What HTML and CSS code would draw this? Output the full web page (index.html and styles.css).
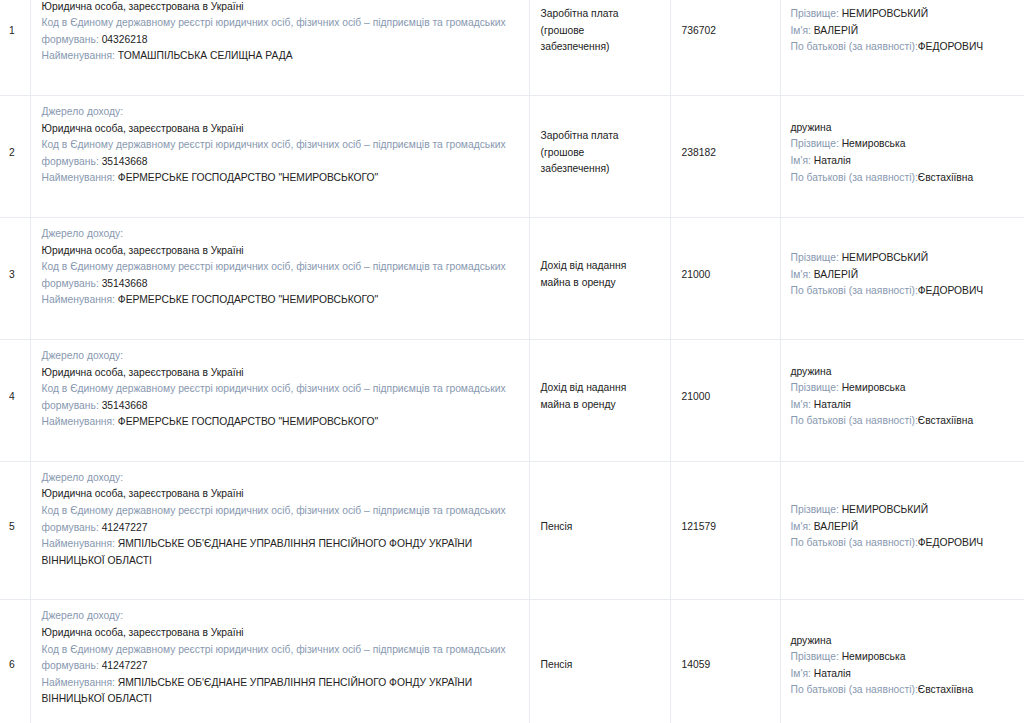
FILE: index.html
```html
<!DOCTYPE html>
<html lang="uk">
<head>
<meta charset="utf-8">
<link rel="stylesheet" href="styles.css">
</head>
<body>
<table class="income">
  <colgroup>
    <col class="c-num"><col class="c-src"><col class="c-type"><col class="c-sum"><col class="c-person">
  </colgroup>
  <tbody>
    <tr>
      <td class="num">1</td>
      <td class="src"><div class="src-body">
        <div class="lbl">Джерело доходу:</div>
        <div>Юридична особа, зареєстрована в Україні</div>
        <div><span class="lbl">Код в Єдиному державному реєстрі юридичних осіб, фізичних осіб – підприємців та громадських формувань:</span> 04326218</div>
        <div><span class="lbl">Найменування:</span> ТОМАШПІЛЬСЬКА СЕЛИЩНА РАДА</div>
      </div></td>
      <td class="type">Заробітна плата (грошове забезпечення)</td>
      <td class="sum">736702</td>
      <td class="person">
        <div><span class="lbl">Прізвище:</span> НЕМИРОВСЬКИЙ</div>
        <div><span class="lbl">Ім'я:</span> ВАЛЕРІЙ</div>
        <div><span class="lbl">По батькові (за наявності):</span>ФЕДОРОВИЧ</div>
      </td>
    </tr>
    <tr>
      <td class="num">2</td>
      <td class="src"><div class="src-body">
        <div class="lbl">Джерело доходу:</div>
        <div>Юридична особа, зареєстрована в Україні</div>
        <div><span class="lbl">Код в Єдиному державному реєстрі юридичних осіб, фізичних осіб – підприємців та громадських формувань:</span> 35143668</div>
        <div><span class="lbl">Найменування:</span> ФЕРМЕРСЬКЕ ГОСПОДАРСТВО "НЕМИРОВСЬКОГО"</div>
      </div></td>
      <td class="type">Заробітна плата (грошове забезпечення)</td>
      <td class="sum">238182</td>
      <td class="person">
        <div>дружина</div>
        <div><span class="lbl">Прізвище:</span> Немировська</div>
        <div><span class="lbl">Ім'я:</span> Наталія</div>
        <div><span class="lbl">По батькові (за наявності):</span>Євстахіївна</div>
      </td>
    </tr>
    <tr>
      <td class="num">3</td>
      <td class="src"><div class="src-body">
        <div class="lbl">Джерело доходу:</div>
        <div>Юридична особа, зареєстрована в Україні</div>
        <div><span class="lbl">Код в Єдиному державному реєстрі юридичних осіб, фізичних осіб – підприємців та громадських формувань:</span> 35143668</div>
        <div><span class="lbl">Найменування:</span> ФЕРМЕРСЬКЕ ГОСПОДАРСТВО "НЕМИРОВСЬКОГО"</div>
      </div></td>
      <td class="type">Дохід від надання майна в оренду</td>
      <td class="sum">21000</td>
      <td class="person">
        <div><span class="lbl">Прізвище:</span> НЕМИРОВСЬКИЙ</div>
        <div><span class="lbl">Ім'я:</span> ВАЛЕРІЙ</div>
        <div><span class="lbl">По батькові (за наявності):</span>ФЕДОРОВИЧ</div>
      </td>
    </tr>
    <tr>
      <td class="num">4</td>
      <td class="src"><div class="src-body">
        <div class="lbl">Джерело доходу:</div>
        <div>Юридична особа, зареєстрована в Україні</div>
        <div><span class="lbl">Код в Єдиному державному реєстрі юридичних осіб, фізичних осіб – підприємців та громадських формувань:</span> 35143668</div>
        <div><span class="lbl">Найменування:</span> ФЕРМЕРСЬКЕ ГОСПОДАРСТВО "НЕМИРОВСЬКОГО"</div>
      </div></td>
      <td class="type">Дохід від надання майна в оренду</td>
      <td class="sum">21000</td>
      <td class="person">
        <div>дружина</div>
        <div><span class="lbl">Прізвище:</span> Немировська</div>
        <div><span class="lbl">Ім'я:</span> Наталія</div>
        <div><span class="lbl">По батькові (за наявності):</span>Євстахіївна</div>
      </td>
    </tr>
    <tr>
      <td class="num">5</td>
      <td class="src"><div class="src-body">
        <div class="lbl">Джерело доходу:</div>
        <div>Юридична особа, зареєстрована в Україні</div>
        <div><span class="lbl">Код в Єдиному державному реєстрі юридичних осіб, фізичних осіб – підприємців та громадських формувань:</span> 41247227</div>
        <div><span class="lbl">Найменування:</span> ЯМПІЛЬСЬКЕ ОБ'ЄДНАНЕ УПРАВЛІННЯ ПЕНСІЙНОГО ФОНДУ УКРАЇНИ ВІННИЦЬКОЇ ОБЛАСТІ</div>
      </div></td>
      <td class="type">Пенсія</td>
      <td class="sum">121579</td>
      <td class="person">
        <div><span class="lbl">Прізвище:</span> НЕМИРОВСЬКИЙ</div>
        <div><span class="lbl">Ім'я:</span> ВАЛЕРІЙ</div>
        <div><span class="lbl">По батькові (за наявності):</span>ФЕДОРОВИЧ</div>
      </td>
    </tr>
    <tr>
      <td class="num">6</td>
      <td class="src"><div class="src-body">
        <div class="lbl">Джерело доходу:</div>
        <div>Юридична особа, зареєстрована в Україні</div>
        <div><span class="lbl">Код в Єдиному державному реєстрі юридичних осіб, фізичних осіб – підприємців та громадських формувань:</span> 41247227</div>
        <div><span class="lbl">Найменування:</span> ЯМПІЛЬСЬКЕ ОБ'ЄДНАНЕ УПРАВЛІННЯ ПЕНСІЙНОГО ФОНДУ УКРАЇНИ ВІННИЦЬКОЇ ОБЛАСТІ</div>
      </div></td>
      <td class="type">Пенсія</td>
      <td class="sum">14059</td>
      <td class="person">
        <div>дружина</div>
        <div><span class="lbl">Прізвище:</span> Немировська</div>
        <div><span class="lbl">Ім'я:</span> Наталія</div>
        <div><span class="lbl">По батькові (за наявності):</span>Євстахіївна</div>
      </td>
    </tr>
  </tbody>
</table>
</body>
</html>
```
FILE: styles.css
```css
html, body {
  margin: 0;
  padding: 0;
  background: #ffffff;
  overflow: hidden;
}
body {
  font-family: "Liberation Sans", Arial, sans-serif;
  font-size: 10.3px;
  line-height: 16.6px;
  color: #222222;
}
.income {
  width: 1024px;
  border-collapse: collapse;
  table-layout: fixed;
  margin-top: -27px;
}
.c-num { width: 30px; }
.c-src { width: 499px; }
.c-type { width: 141px; }
.c-sum { width: 110px; }
.c-person { width: auto; }
.income td {
  border-top: 1px solid #e8ebef;
  border-bottom: 1px solid #e8ebef;
  border-left: 1px solid #e8ebef;
  padding: 8px 10px 15px 11px;
  vertical-align: middle;
  text-align: left;
}
.income td.num {
  border-left: none;
  padding-left: 9px;
  padding-right: 0;
}
.income td.type {
  padding-right: 36px;
}
.income td.person {
  padding-left: 10px;
}
.src-body {
  padding-bottom: 15px;
}
.lbl {
  color: #8898b0;
}
```
